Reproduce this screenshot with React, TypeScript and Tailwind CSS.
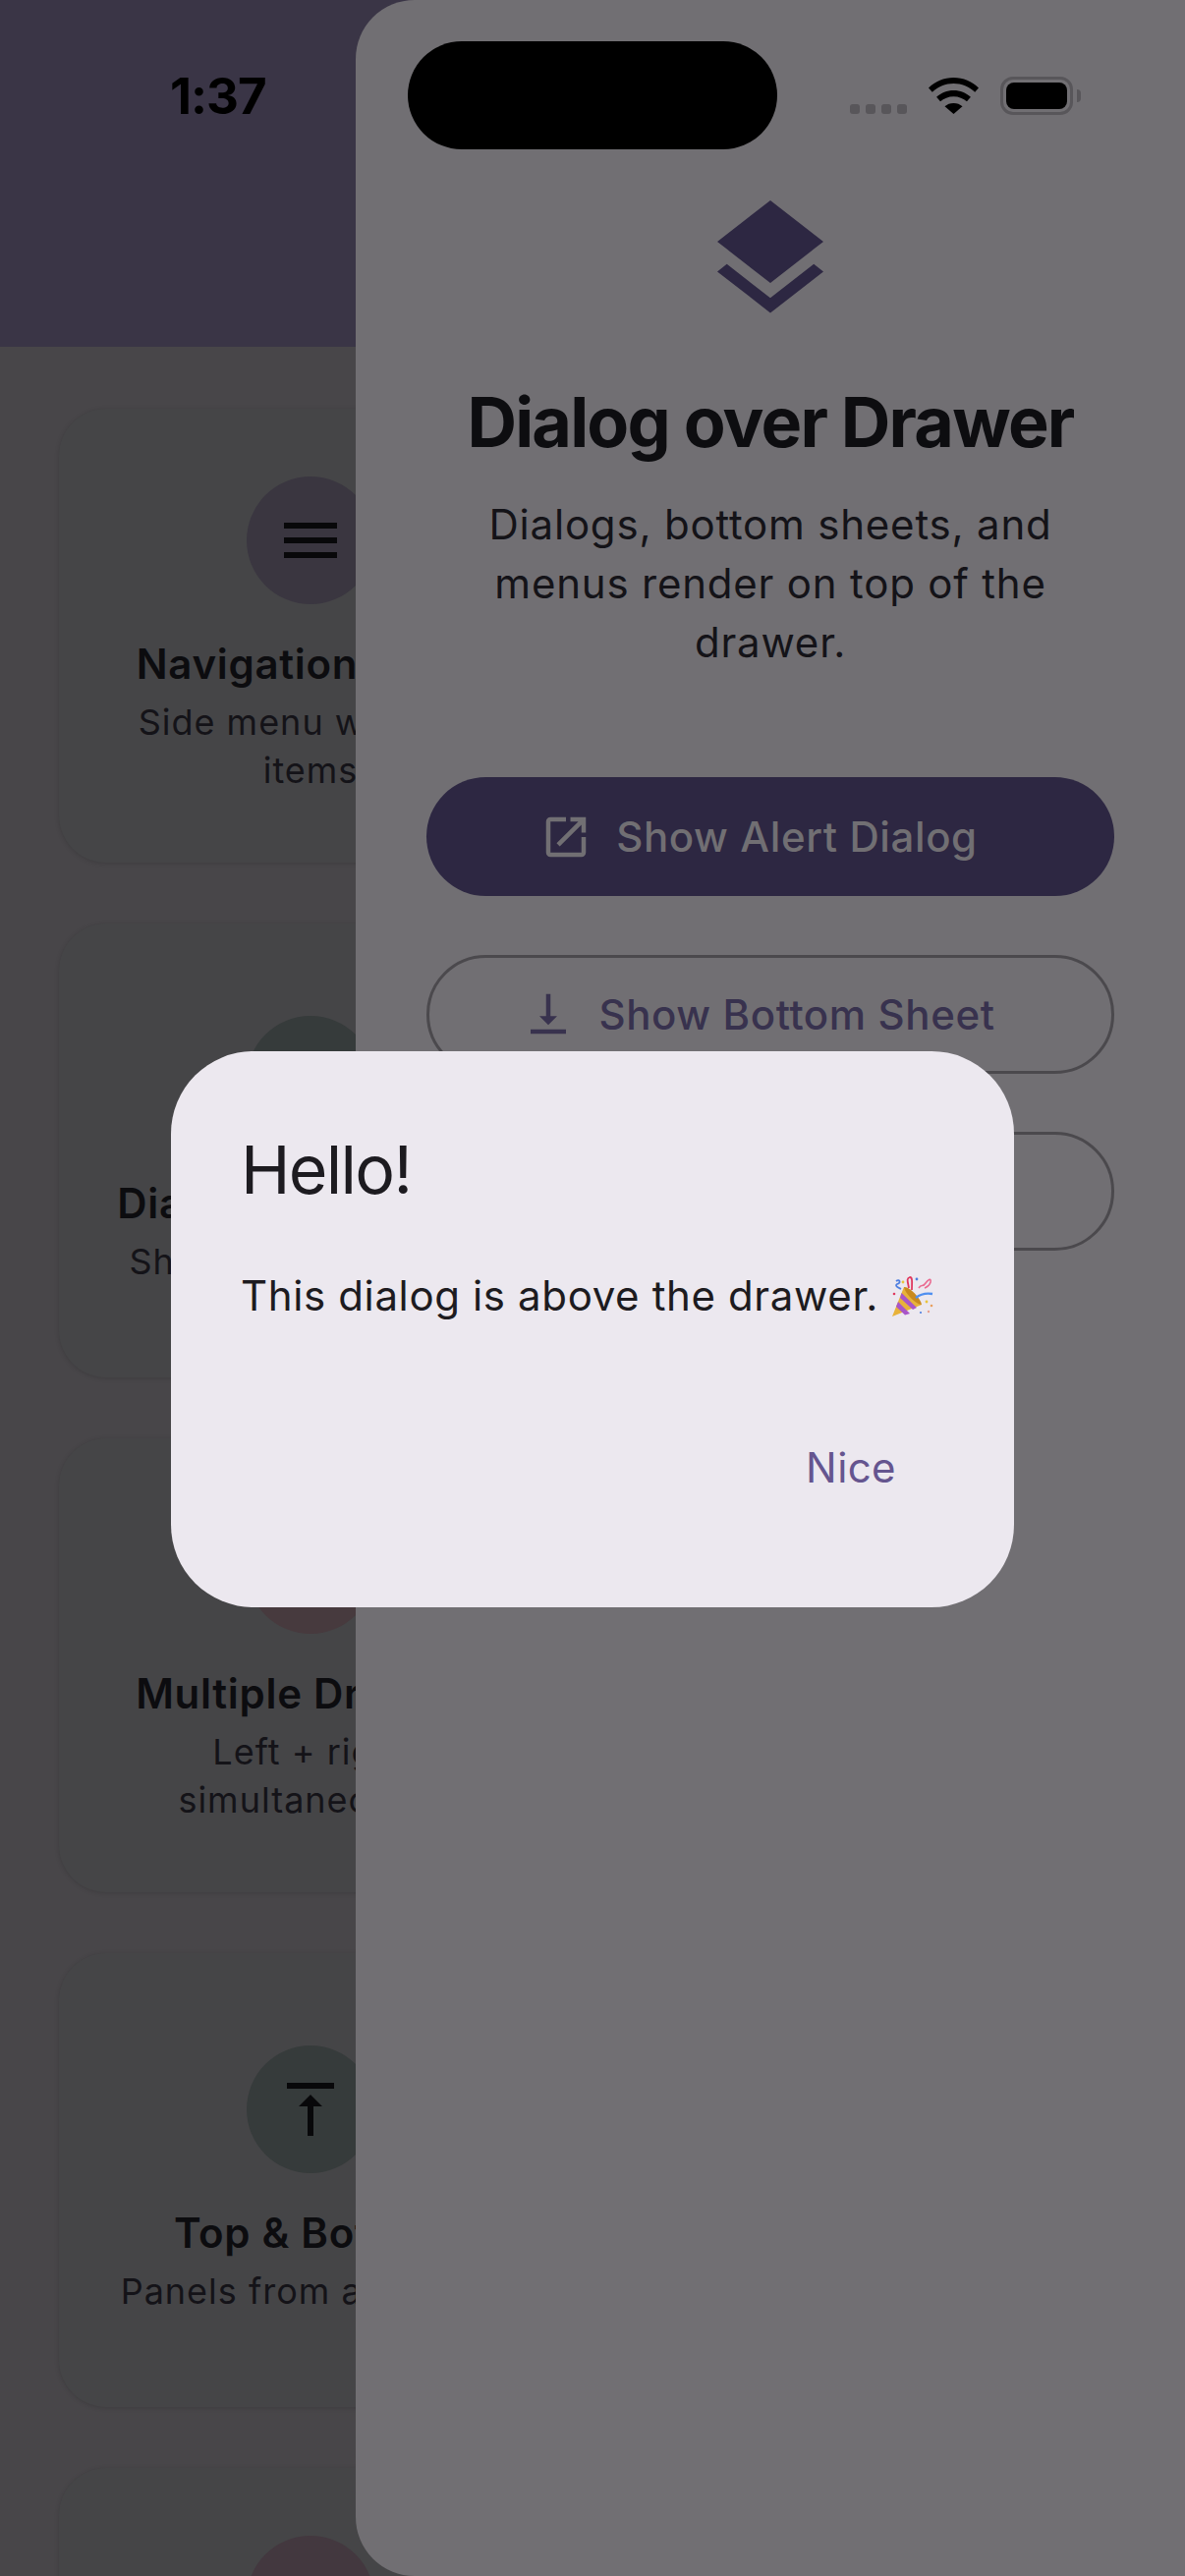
import { ReactNode } from 'react';

const menuPath = 'M3 18h18v-2H3v2zm0-5h18v-2H3v2zm0-7v2h18V6H3z';
const layersPath = 'M11.99 18.54l-7.37-5.73L3 14.07l9 7 9-7-1.63-1.27-7.38 5.74zM12 16l7.36-5.73L21 9l-9-7-9 7 1.63 1.27L12 16z';
const openPath = 'M19 19H5V5h7V3H5c-1.11 0-2 .9-2 2v14c0 1.1.89 2 2 2h14c1.1 0 2-.9 2-2v-7h-2v7zM14 3v2h3.59l-9.83 9.83 1.41 1.41L19 6.41V10h2V3h-7z';
const bottomPath = 'M16 13h-3V3h-2v10H8l4 4 4-4zM4 19v2h16v-2H4z';
const topPath = 'M8 11h3v10h2V11h3l-4-4-4 4zM4 3v2h16V3H4z';
const dialogPath = 'M19 5H5c-1.1 0-2 .9-2 2v10c0 1.1.9 2 2 2h14c1.1 0 2-.9 2-2V7c0-1.1-.9-2-2-2z';

const Icon = ({ d, className }: { d: string; className: string }) => (
  <svg viewBox="0 0 24 24" fill="currentColor" className={className}>
    <path d={d} />
  </svg>
);

const cards = [
  { title: 'Navigation Menu', desc: 'Side menu with nav items', circle: 'bg-[#3a3640]', icon: menuPath },
  { title: 'Dialogs & Overlays', desc: 'Sheets over drawers', circle: 'bg-[#363b3b]', icon: dialogPath },
  { title: 'Multiple Drawers', desc: 'Left + right simultaneously', circle: 'bg-[#473a3e]', icon: menuPath },
  { title: 'Top & Bottom', desc: 'Panels from all edges', circle: 'bg-[#363b3b]', icon: topPath },
];

const cardClass = 'flex flex-col items-center rounded-[48px] bg-[#454547] px-[48px] text-center shadow-[0_1px_5px_rgba(0,0,0,0.14)]';

const DemoCard = ({ title, desc, circle, icon }: (typeof cards)[number]) => (
  <div className={`${cardClass} justify-center`}>
    <div className={`flex size-[130px] items-center justify-center rounded-full text-[#08080a] ${circle}`}>
      <Icon d={icon} className="size-[72px]" />
    </div>
    <div className="mt-[31px] mb-[5px] text-[42px] leading-[60px] font-semibold tracking-[0.7px] whitespace-nowrap text-[#0c0c0f]">{title}</div>
    <div className="text-[36px] leading-[49px] tracking-[1px] text-[#141318]">{desc}</div>
  </div>
);

const DrawerButton = ({ children, icon, filled }: { children: ReactNode; icon: string; filled?: boolean }) => (
  <div
    className={
      filled
        ? 'flex h-[121px] w-full items-center justify-center gap-[24px] rounded-full bg-[#2d2742] pr-[24px] text-[#716f73]'
        : 'flex h-[121px] w-full items-center justify-center gap-[24px] rounded-full border-[3px] border-[#4b494d] pr-[24px] text-[#38324e]'
    }
  >
    <Icon d={icon} className="size-[54px]" />
    <span className="text-[42px] font-[450] tracking-[0.6px]">{children}</span>
  </div>
);

// 🎉 drawn by hand, no colour emoji font here
const PartyPopper = () => (
  <svg viewBox="0 0 44 44" className="ml-[13px] size-[44px] shrink-0">
    <path d="M1 43 L13 13 L31 31 Z" fill="#e8b23a" />
    <path d="M13 13 C18 12 30 24 31 31 C26 31 14 20 13 13 Z" fill="#c98a1e" />
    <path d="M7 28 L19 40 L14 41.5 L5 33 Z" fill="#a855c8" />
    <path d="M10.5 19 L26 34 L22 36 L9 24 Z" fill="#a855c8" />
    <path d="M5 7 C9 4 10 9 6 10 C3 12 8 14 10 15" fill="none" stroke="#4f7fe0" strokeWidth="1.8" />
    <path d="M18 14 C17 8 15 4 19 3 C22 3 21 9 21 16" fill="none" stroke="#e0395f" strokeWidth="1.8" />
    <path d="M28 14 C31 9 32 14 35 9 C37 6 41 3 40 8 C39 12 36 13 34 14" fill="none" stroke="#ea6a90" strokeWidth="1.6" />
    <path d="M25 24 C30 20 36 19 42 20" fill="none" stroke="#4f8ff0" strokeWidth="2.4" />
    <circle cx="12" cy="8" r="1.4" fill="#e8c43a" />
    <circle cx="26" cy="5" r="1.4" fill="#4f7fe0" />
    <circle cx="3" cy="20" r="1.3" fill="#e0395f" />
    <circle cx="36" cy="28" r="1.4" fill="#e8c43a" />
    <circle cx="41" cy="32" r="1.3" fill="#e8a060" />
    <circle cx="38" cy="38" r="1.2" fill="#e8a090" />
    <circle cx="30" cy="39" r="1.1" fill="#4f7fe0" />
  </svg>
);

const StatusBar = () => (
  <div className="absolute inset-x-0 top-0 h-[160px]">
    <span className="absolute top-[72px] left-[173px] text-[51px] leading-[52px] font-bold tracking-[-1px] text-black">1:37</span>
    <div className="absolute top-[42px] left-[415px] h-[110px] w-[376px] rounded-full bg-black" />
    <div className="absolute top-[106px] left-[865px] flex gap-[6px]">
      {[0, 1, 2, 3].map((i) => (
        <span key={i} className="h-[10px] w-[10px] rounded-[3px] bg-[#58565a]" />
      ))}
    </div>
    <svg viewBox="0 0 51 37" className="absolute top-[79px] left-[945px] h-[37px] w-[51px]">
      <path d="M25.5 0C15.5 0 7 3.8 0 10.4l3.8 4.4C9.8 9.3 17.3 6 25.5 6s15.7 3.3 21.7 8.8l3.8-4.4C44 3.8 35.5 0 25.5 0z" fill="#000" />
      <path d="M25.5 13c-6.8 0-12.6 2.6-17.4 6.8l3.9 4.5c3.6-3.1 8.2-5.1 13.5-5.1s9.9 2 13.5 5.1l3.9-4.5C38.1 15.6 32.3 13 25.5 13z" fill="#000" />
      <path d="M25.5 26c-3.5 0-6.6 1.2-9 3.3l9 7.7 9-7.7c-2.4-2.1-5.5-3.3-9-3.3z" fill="#000" />
    </svg>
    <div className="absolute top-[78px] left-[1018px] h-[39px] w-[74px] rounded-[13px] border-[3px] border-[#58565a] p-[3px]">
      <div className="h-full w-full rounded-[8px] bg-black" />
    </div>
    <div className="absolute top-[91px] left-[1096px] h-[13px] w-[4px] rounded-r-full bg-[#58565a]" />
  </div>
);

export default function App() {
  return (
    <div className="relative h-[2622px] w-[1206px] overflow-hidden bg-[#484649] font-['Inter',sans-serif]">
      <div className="h-[353px] bg-[#3a3546]" />
      <div className="grid w-[572px] auto-rows-[462px] gap-y-[62px] pt-[63px] pl-[60px]">
        {cards.map((card) => (
          <DemoCard key={card.title} {...card} />
        ))}
        {/* last card runs off the page, only its circle shows */}
        <div className={`${cardClass} pt-[69px]`}>
          <div className="size-[130px] rounded-full bg-[#43383f]" />
        </div>
      </div>

      <div className="absolute inset-y-0 right-0 left-[362px] flex flex-col items-center rounded-l-[60px] bg-[#716f73] px-[72px] pt-[192px]">
        <Icon d={layersPath} className="size-[144px] text-[#2d2742]" />
        <h1 className="mt-[54px] text-[70px] leading-[80px] font-bold tracking-[-1.8px] whitespace-nowrap text-[#0d0d10]">Dialog over Drawer</h1>
        <p className="mt-[34px] text-center text-[42px] leading-[60px] tracking-[0.8px] text-[#141318]">
          Dialogs, bottom sheets, and menus render on top of the drawer.
        </p>
        <div className="mt-[107px] flex w-full flex-col gap-[59.5px]">
          <DrawerButton icon={openPath} filled>Show Alert Dialog</DrawerButton>
          <DrawerButton icon={bottomPath}>Show Bottom Sheet</DrawerButton>
          <DrawerButton icon={menuPath}>Show Menu</DrawerButton>
        </div>
      </div>

      <StatusBar />

      <div className="absolute top-[1070px] left-[174px] flex h-[566px] w-[858px] flex-col rounded-[84px] bg-[#ece8ef] px-[71px] pt-[72px] text-[#1d1b20]">
        <div className="text-[68px] leading-[96px] tracking-[-1.7px]">Hello!</div>
        <div className="mt-[51px] flex items-center text-[42px] leading-[60px] tracking-[0.63px] whitespace-nowrap">
          This dialog is above the drawer.
          <PartyPopper />
        </div>
        <div className="mt-[115px] self-end pr-[49px] text-[42px] leading-[60px] font-[420] tracking-[0.4px] text-[#65558f]">Nice</div>
      </div>
    </div>
  );
}
